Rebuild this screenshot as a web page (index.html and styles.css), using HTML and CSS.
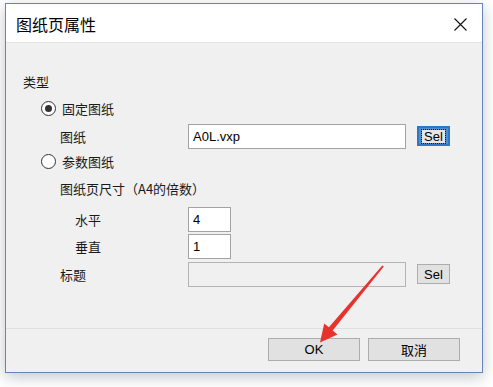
FILE: index.html
```html
<!DOCTYPE html>
<html lang="zh-CN">
<head>
    <meta charset="UTF-8">
    <title>图纸页属性</title>
    <link rel="stylesheet" href="styles.css">
</head>
<body>
    <div class="window">
        <div class="titlebar">
            <span class="title">图纸页属性</span>
            <svg class="close" width="13" height="13" viewBox="0 0 13 13">
                <path d="M0.5 0.5 L12.5 12.5 M12.5 0.5 L0.5 12.5" stroke="#111" stroke-width="1.1" fill="none"/>
            </svg>
        </div>
        <div class="content">
            <div class="row group">类型</div>
            <div class="row radio-row r1"><span class="radio checked"></span>固定图纸</div>
            <div class="row field r2">
                <span class="label">图纸</span>
                <input class="edit wide" type="text" value="A0L.vxp">
                <button class="sel focused"><span>Sel</span></button>
            </div>
            <div class="row radio-row r3"><span class="radio"></span>参数图纸</div>
            <div class="row sub r4">图纸页尺寸（A4的倍数）</div>
            <div class="row field deep r5">
                <span class="label">水平</span>
                <input class="edit small" type="text" value="4">
            </div>
            <div class="row field deep r6">
                <span class="label">垂直</span>
                <input class="edit small" type="text" value="1">
            </div>
            <div class="row field r7">
                <span class="label">标题</span>
                <input class="edit wide" type="text" disabled>
                <button class="sel">Sel</button>
            </div>
        </div>
        <div class="footer">
            <button class="btn">OK</button>
            <button class="btn">取消</button>
        </div>
    </div>

    <svg class="arrow" width="493" height="387" viewBox="0 0 493 387">
        <polygon points="383.8,266.6 332.7,330.5 337.5,334.5 320,342.5 324.2,323.4 328.9,327.3 382.3,265.4" fill="#e8322e"/>
    </svg>
</body>
</html>
```

FILE: styles.css
```css
* {
    margin: 0;
    padding: 0;
    box-sizing: border-box;
}
body {
    background-color: #ffffff;
    font-family: "Liberation Sans", "Noto Sans CJK SC", sans-serif;
    font-size: 13px;
    color: #1a1a1a;
    width: 493px;
    height: 387px;
    overflow: hidden;
}
.window {
    margin: 3px 0 0 5px;
    width: 478px;
    height: 370px;
    border: 1px solid #6783b9;
    background-color: #f0f0f0;
    box-shadow: 0 4px 14px rgba(40, 50, 70, 0.28);
    display: flex;
    flex-direction: column;
}
.titlebar {
    height: 39px;
    background-color: #ffffff;
    border-bottom: 1px solid #e3e3e3;
    display: flex;
    align-items: center;
    justify-content: space-between;
    padding: 2px 15px 0 10px;
}
.title {
    font-family: "Noto Sans CJK SC", sans-serif;
    font-size: 16px;
    color: #000000;
}
.close {
    display: block;
}
.content {
    flex: 1;
    padding-top: 25px;
}
.row {
    display: flex;
    align-items: center;
    font-family: "Noto Sans CJK SC", sans-serif;
}
.group {
    height: 26px;
    padding-left: 17px;
}
.radio-row {
    padding-left: 35px;
}
.r1 { height: 28px; }
.r2 { height: 28px; }
.r3 { height: 22px; }
.r4 { height: 32px; }
.r5 { height: 30px; }
.r6 { height: 25px; }
.r7 { height: 30px; }
.radio {
    width: 15px;
    height: 15px;
    border: 1px solid #333333;
    border-radius: 50%;
    background-color: #ffffff;
    margin-right: 6px;
    display: flex;
    align-items: center;
    justify-content: center;
}
.radio.checked::after {
    content: "";
    width: 7px;
    height: 7px;
    border-radius: 50%;
    background-color: #333333;
}
.sub {
    padding-left: 54px;
}
.field {
    padding-left: 54px;
}
.field .label {
    width: 128px;
}
.field.deep {
    padding-left: 69px;
}
.field.deep .label {
    width: 113px;
}
.edit {
    height: 25px;
    border: 1px solid #a3a3a3;
    background-color: #ffffff;
    padding: 0 4px;
    font-family: "Liberation Sans", sans-serif;
    font-size: 13px;
    color: #000000;
    outline: none;
}
.edit.wide {
    width: 218px;
}
.edit.small {
    width: 43px;
}
.edit:disabled {
    background-color: #f0f0f0;
    border-color: #b4b4b4;
}
.sel {
    margin-left: 11px;
    width: 33px;
    height: 20px;
    border: 1px solid #adadad;
    background-color: #e1e1e1;
    font-family: "Liberation Sans", sans-serif;
    font-size: 13px;
    color: #000000;
    display: flex;
    align-items: center;
    justify-content: center;
}
.sel.focused {
    border: 2px solid #2b78c9;
    background-color: #4a8fd6;
}
.sel.focused span {
    background-color: #e6e6e6;
    outline: 1px dotted #111111;
    padding: 0 2px;
    line-height: 13px;
}
.footer {
    height: 44px;
    border-top: 1px solid #dfdfdf;
    display: flex;
    justify-content: flex-end;
    gap: 8px;
    padding: 9px 22px 0 0;
}
.btn {
    width: 92px;
    height: 23px;
    border: 1px solid #adadad;
    background-color: #e1e1e1;
    font-family: "Liberation Sans", "Noto Sans CJK SC", sans-serif;
    font-size: 13px;
    color: #000000;
}
.arrow {
    position: absolute;
    left: 0;
    top: 0;
    pointer-events: none;
}
```
